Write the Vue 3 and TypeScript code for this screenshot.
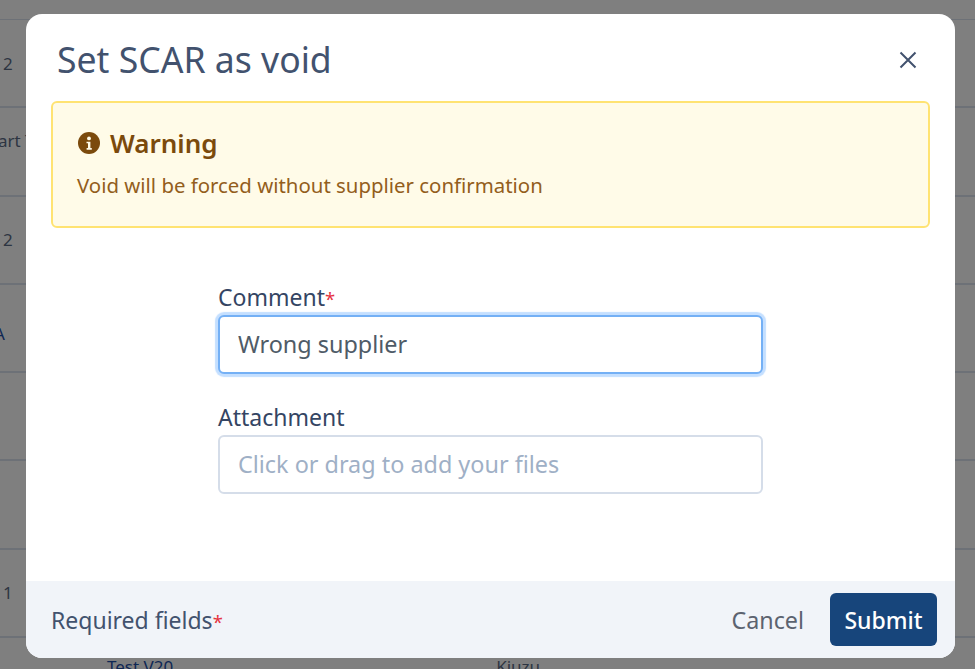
<script setup lang="ts">
import { ref } from 'vue'

const comment = ref('Wrong supplier')

// rows of the table behind the dialog, only the left edge shows
const rows = [
  { text: '2', kind: '' },
  { text: 'art T', kind: 'clipped' },
  { text: '2', kind: '' },
  { text: 'A', kind: 'link' },
  { text: '', kind: '' },
  { text: '', kind: '' },
  { text: '1', kind: '' },
]
</script>

<template>
  <div class="page">
    <div class="table">
      <div class="head-row"></div>
      <div v-for="(row, i) in rows" :key="i" class="row">
        <span class="cell" :class="row.kind">{{ row.text }}</span>
      </div>
      <div class="last-row">
        <span class="test-link">Test V20</span>
        <span class="owner">Kiuzu</span>
      </div>
    </div>

    <div class="overlay"></div>

    <div class="modal">
      <div class="modal-body">
        <div class="modal-header">
          <h2>Set SCAR as void</h2>
          <button class="close-button" aria-label="Close">
            <svg width="18" height="18" viewBox="0 0 18 18" fill="none">
              <path d="M1.5 1.5L16.5 16.5M16.5 1.5L1.5 16.5" stroke="#42526e" stroke-width="2" />
            </svg>
          </button>
        </div>

        <div class="warning">
          <div class="warning-title">
            <svg width="22" height="22" viewBox="0 0 22 22">
              <circle cx="11" cy="11" r="11" fill="#7b4a0c" />
              <circle cx="11" cy="6.4" r="1.9" fill="#fffbe8" />
              <path d="M8.5 9.7h3.9v6.4h1.4v1.6H8.6v-1.6H10v-4.8H8.5z" fill="#fffbe8" />
            </svg>
            <span>Warning</span>
          </div>
          <p>Void will be forced without supplier confirmation</p>
        </div>

        <form class="form" @submit.prevent>
          <label class="field">
            <span class="label">Comment<span class="required">*</span></span>
            <input v-model="comment" class="text-input focused" />
          </label>
          <label class="field">
            <span class="label">Attachment</span>
            <input class="text-input" placeholder="Click or drag to add your files" />
          </label>
        </form>
      </div>

      <div class="modal-footer">
        <span class="required-note">Required fields<span class="required">*</span></span>
        <div class="actions">
          <button class="cancel-button">Cancel</button>
          <button class="submit-button">Submit</button>
        </div>
      </div>
    </div>
  </div>
</template>

<style>
html,
body {
  margin: 0;
  background: #808080;
}
</style>

<style scoped>
.page {
  position: relative;
  width: 975px;
  height: 669px;
  overflow: hidden;
  font-family: "Noto Sans", "Open Sans", sans-serif;
}

.table {
  height: 100%;
  background: #fff;
}
.head-row {
  height: 20px;
  box-sizing: border-box;
  border-bottom: 1px solid #dbe3ee;
}
.row {
  height: 88.3px;
  box-sizing: border-box;
  border-bottom: 2px solid #dbe3ee;
  display: flex;
  align-items: center;
  width: 975px;
  font-size: 17px;
  color: #5a6b85;
}
.cell {
  padding-left: 3px;
  white-space: nowrap;
}
.cell.clipped {
  margin-left: -5px;
  padding-bottom: 22px;
}
.cell.link {
  color: #1d4fa8;
  margin-left: -9px;
  padding-top: 10px;
}
.last-row {
  font-size: 17px;
  color: #5a6b85;
  display: flex;
  padding-top: 17px;
  line-height: 24px;
}
.test-link {
  margin-left: 107px;
  color: #1d4fa8;
}
.owner {
  margin-left: 323px;
}

.overlay {
  position: absolute;
  inset: 0;
  background: rgba(0, 0, 0, 0.5);
}

.modal {
  position: absolute;
  left: 26px;
  top: 14px;
  width: 929px;
  height: 644px;
  background: #fff;
  border-radius: 16px;
  overflow: hidden;
  display: flex;
  flex-direction: column;
}
.modal-body {
  flex: 1;
  padding: 0 25px;
}
.modal-header {
  display: flex;
  align-items: center;
  justify-content: space-between;
  height: 87px;
  padding: 5px 13px 0 6px;
  box-sizing: border-box;
}
h2 {
  margin: 0 0 2px;
  font-size: 35.6px;
  font-weight: 400;
  color: #42526e;
}
.close-button {
  display: flex;
  padding: 0;
  border: 0;
  background: none;
}

.warning {
  box-sizing: border-box;
  height: 127px;
  padding: 24px 24px 0;
  background: #fffbe8;
  border: 2px solid #ffe372;
  border-radius: 6px;
  color: #7b4a0c;
}
.warning-title {
  display: flex;
  align-items: center;
  gap: 10px;
  margin-left: 1px;
  font-size: 26px;
  font-weight: 600;
  line-height: 32px;
}
.warning p {
  margin: 13px 0 0;
  font-size: 20.4px;
  line-height: 26px;
  color: #935e1c;
}

.form {
  width: 545px;
  margin: 56px auto 0;
  display: flex;
  flex-direction: column;
  gap: 30px;
}
.field {
  display: flex;
  flex-direction: column;
  gap: 5px;
}
.label {
  font-size: 23px;
  line-height: 26px;
  color: #344563;
}
.required {
  font-size: 0.8em;
  line-height: 0;
  color: #e5333f;
}
.text-input {
  box-sizing: border-box;
  width: 100%;
  height: 59px;
  padding: 0 18px 2px;
  font: inherit;
  font-size: 23.4px;
  color: #4f5b67;
  background: #fff;
  border: 2px solid #d5dde9;
  border-radius: 6px;
  outline: none;
}
.text-input::placeholder {
  color: #9fb0c6;
  opacity: 1;
}
.text-input.focused {
  border-color: #74b0f5;
  box-shadow: 0 0 1px 3px #c4dfff;
}

.modal-footer {
  height: 77px;
  flex: none;
  background: #f1f4f9;
  display: flex;
  align-items: center;
  justify-content: space-between;
  padding: 0 18px 0 25px;
}
.required-note {
  font-size: 23px;
  color: #42526e;
}
.actions {
  display: flex;
  align-items: center;
  gap: 26px;
}
.cancel-button {
  padding: 0;
  border: 0;
  background: none;
  font: inherit;
  font-size: 23.3px;
  color: #5c6370;
}
.submit-button {
  width: 107px;
  height: 53px;
  border: 0;
  border-radius: 6px;
  background: #17457b;
  color: #fff;
  font: inherit;
  font-size: 23px;
  font-weight: 500;
}
</style>
